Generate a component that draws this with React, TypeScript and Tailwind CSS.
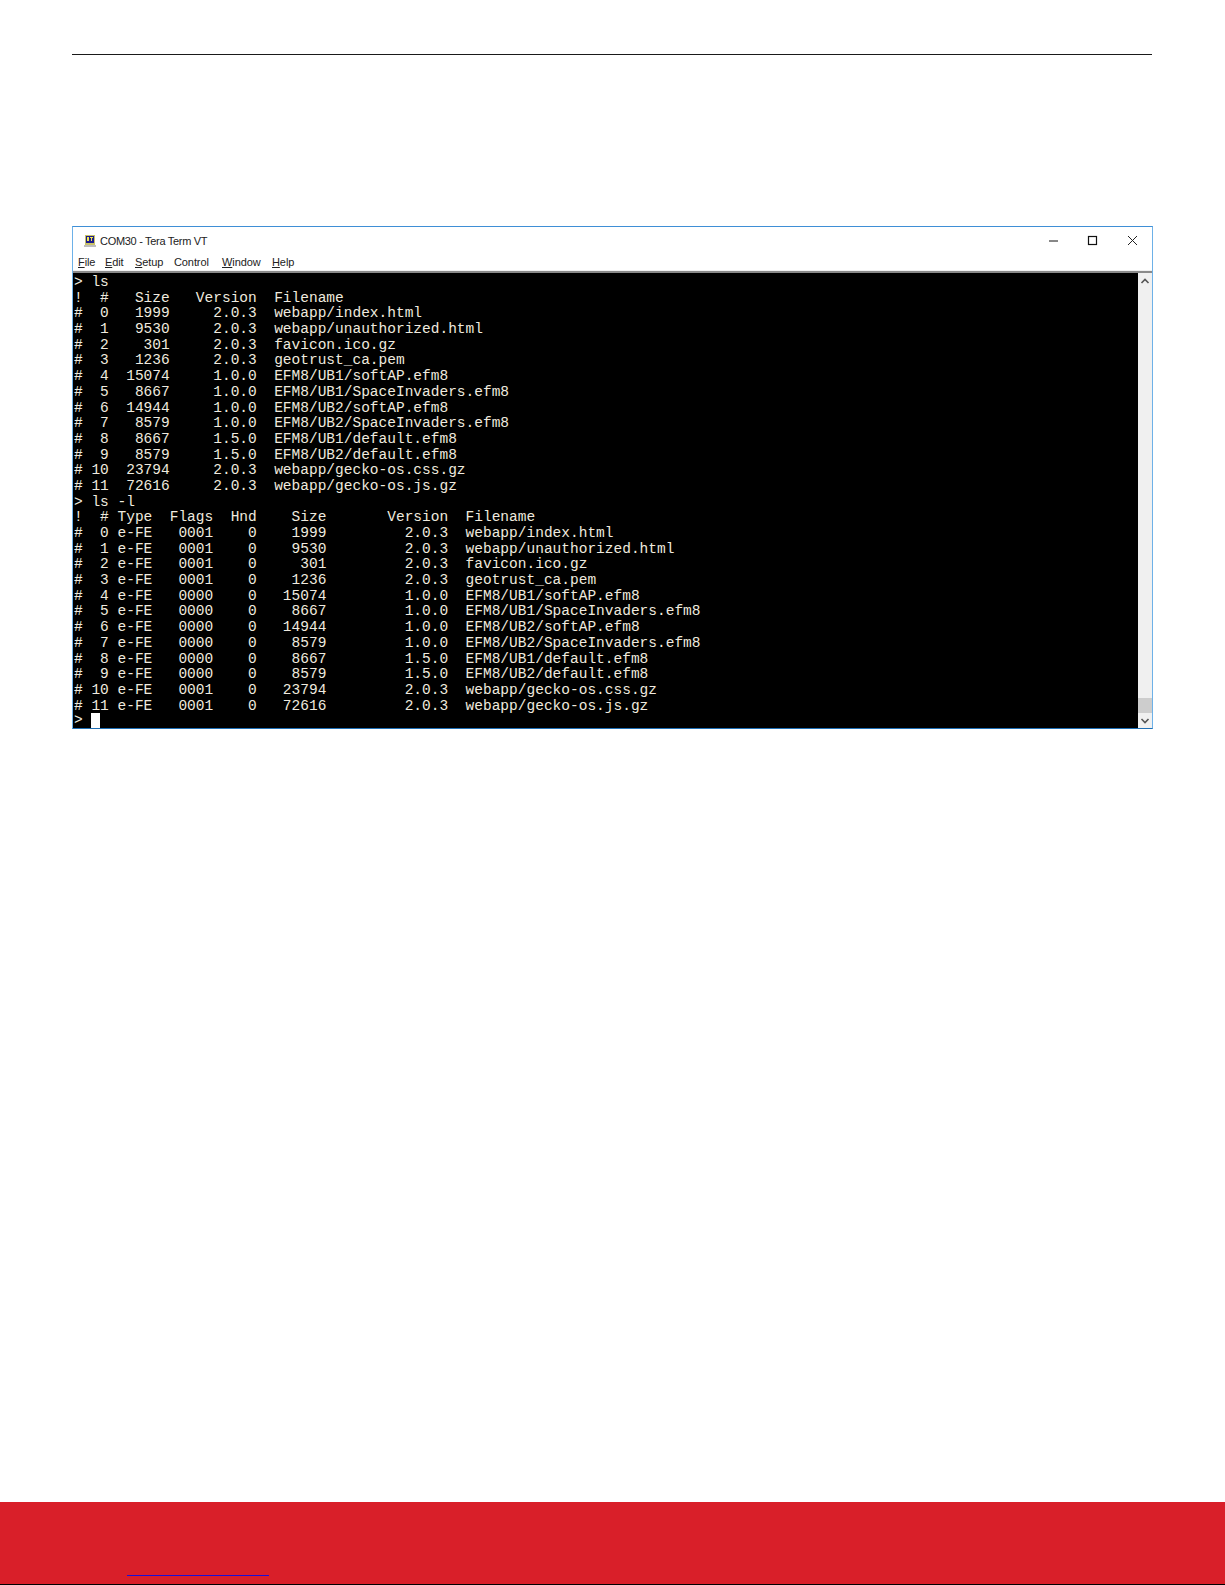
const pad = (v: string | number, n: number) => String(v).padStart(n, " ");
const files: [number, number, string, string, string][] = [
  [0, 1999, "2.0.3", "webapp/index.html", "0001"],
  [1, 9530, "2.0.3", "webapp/unauthorized.html", "0001"],
  [2, 301, "2.0.3", "favicon.ico.gz", "0001"],
  [3, 1236, "2.0.3", "geotrust_ca.pem", "0001"],
  [4, 15074, "1.0.0", "EFM8/UB1/softAP.efm8", "0000"],
  [5, 8667, "1.0.0", "EFM8/UB1/SpaceInvaders.efm8", "0000"],
  [6, 14944, "1.0.0", "EFM8/UB2/softAP.efm8", "0000"],
  [7, 8579, "1.0.0", "EFM8/UB2/SpaceInvaders.efm8", "0000"],
  [8, 8667, "1.5.0", "EFM8/UB1/default.efm8", "0000"],
  [9, 8579, "1.5.0", "EFM8/UB2/default.efm8", "0000"],
  [10, 23794, "2.0.3", "webapp/gecko-os.css.gz", "0001"],
  [11, 72616, "2.0.3", "webapp/gecko-os.js.gz", "0001"],
];
const lines: string[] = [
  "> ls",
  "!  #   Size   Version  Filename",
  ...files.map(([i, s, v, f]) => `# ${pad(i, 2)}  ${pad(s, 5)}     ${v}  ${f}`),
  "> ls -l",
  "!  # Type  Flags  Hnd    Size       Version  Filename",
  ...files.map(([i, s, v, f, fl]) => `# ${pad(i, 2)} e-FE   ${fl}    0   ${pad(s, 5)}         ${v}  ${f}`),
];

const menu: [string, string, string][] = [
  ["F", "ile", "w-[27px]"],
  ["E", "dit", "w-[30px]"],
  ["S", "etup", "w-[39px]"],
  ["", "Control", "w-[48px]"],
  ["W", "indow", "w-[50px]"],
  ["H", "elp", "w-[30px]"],
];

export default function App() {
  return (
    <div className="min-h-[1585px] flex flex-col bg-white">
      <div className="mx-[72px] mt-[54px] h-[1px] w-[1080px] bg-[#1a1a1a]" />
      <div className="ml-[72px] mt-[171px] w-[1081px] h-[503px] border border-[#6db1e8] border-t-[#3f8fd6] border-b-[#1f6fb5] flex flex-col">
        <div className="h-[28px] flex items-center pl-[10px] bg-white shrink-0">
          <svg width="14" height="14" viewBox="0 0 14 14" className="mr-[3px]">
            <rect x="1" y="11" width="12" height="2" fill="#bdbdbd" />
            <rect x="2" y="1" width="10" height="10" fill="#c9c26a" />
            <rect x="3" y="2" width="8" height="7" fill="#1a1a8c" />
            <rect x="4" y="3" width="2" height="4" fill="#f2e94e" />
            <rect x="7" y="3" width="3" height="1" fill="#f2e94e" />
            <rect x="8" y="4" width="1" height="3" fill="#f2e94e" />
          </svg>
          <span className="text-[11px] text-[#222] tracking-[-0.3px] font-['Liberation_Sans',sans-serif]">
            COM30 - Tera Term VT
          </span>
          <div className="ml-auto flex items-center">
            <svg width="40" height="14" viewBox="0 0 40 14">
              <path d="M15 7h9" stroke="#111" strokeWidth="1" />
            </svg>
            <svg width="40" height="14" viewBox="0 0 40 14" className="-ml-[1px] mr-[1px]">
              <rect x="15.5" y="2.5" width="8" height="8" fill="none" stroke="#111" strokeWidth="1.2" />
            </svg>
            <svg width="38" height="14" viewBox="0 0 38 14">
              <path d="M14 2l9 9M23 2l-9 9" stroke="#222" strokeWidth="1" fill="none" />
            </svg>
          </div>
        </div>
        <div className="h-[15px] flex items-center pl-[5px] bg-white shrink-0 text-[11px] tracking-[-0.1px] text-[#222] font-['Liberation_Sans',sans-serif]">
          {menu.map(([u, r, w]) => (
            <span key={r + u} className={w}>
              <span className="underline">{u}</span>
              {r}
            </span>
          ))}
        </div>
        <div className="h-[1px] bg-[#f0f0f0] shrink-0" />
        <div className="h-[2px] bg-[#8a8a8a] shrink-0" />
        <div className="flex-1 flex min-h-0">
          <div className="flex-1 bg-black pl-[1px] pt-[2px] font-['Liberation_Mono',monospace] text-[14.5px] leading-[15.7px] text-[#efeadf] whitespace-pre overflow-hidden">
            {lines.map((l, i) => (
              <div key={i} className="h-[15.7px]">
                {l}
              </div>
            ))}
            <div className="h-[13.4px] leading-[13.4px] flex">
              <span>{"> "}</span>
              <span className="w-[9px] h-[15px] -mt-[1px] bg-white shrink-0" />
            </div>
          </div>
          <div className="w-[14px] bg-[#f0f0f0] flex flex-col items-center shrink-0">
            <svg width="10" height="8" viewBox="0 0 10 8" className="mt-[4px]">
              <path d="M1.5 6L5 2.5 8.5 6" stroke="#555" strokeWidth="1.6" fill="none" />
            </svg>
            <div className="mt-auto w-full h-[15px] bg-[#cdcdcd]" />
            <svg width="10" height="8" viewBox="0 0 10 8" className="mt-[4px] mb-[3px]">
              <path d="M1.5 2L5 5.5 8.5 2" stroke="#555" strokeWidth="1.6" fill="none" />
            </svg>
          </div>
        </div>
      </div>
      <div className="mt-auto h-[83px] bg-[#d91f29] border-b border-black flex flex-col justify-end shrink-0">
        <div className="ml-[127px] w-[142px] h-[1px] bg-[#1a10d8] mb-[8px]" />
      </div>
    </div>
  );
}
